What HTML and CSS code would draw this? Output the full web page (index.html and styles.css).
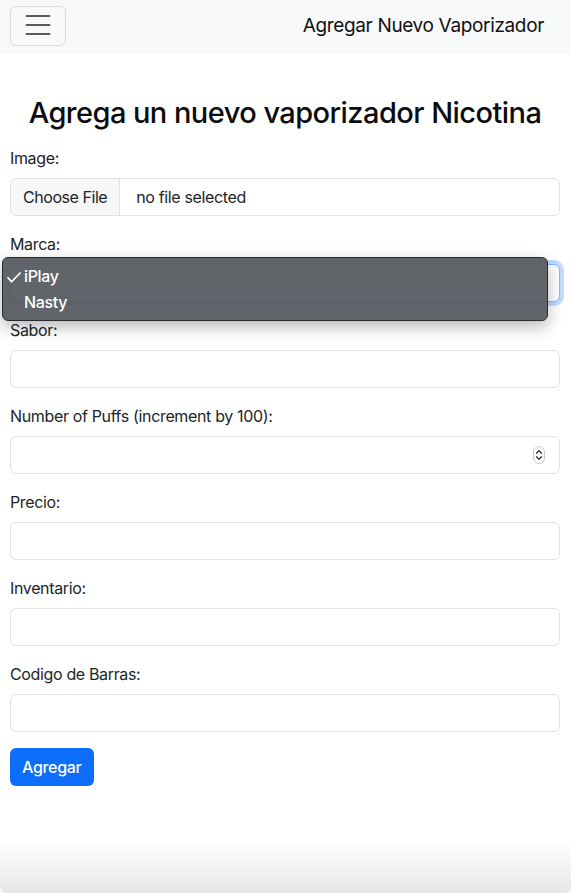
FILE: index.html
```html
<!DOCTYPE html>
<html lang="es">
<head>
<meta charset="utf-8">
<title>Agregar Nuevo Vaporizador</title>
<link rel="stylesheet" href="styles.css">
</head>
<body>
<nav class="navbar">
  <button class="toggler" type="button" aria-label="Menu">
    <svg class="toggler-icon" width="30" height="30" viewBox="0 0 30 30">
      <path d="M3.5 5h23M3.5 14h23M3.5 23h23" stroke="rgba(33,37,41,0.75)" stroke-width="2" stroke-linecap="round"/>
    </svg>
  </button>
  <span class="brand">Agregar Nuevo Vaporizador</span>
</nav>
<main class="container">
  <h1 class="title">Agrega un nuevo vaporizador Nicotina</h1>
  <form class="form">
    <div class="group">
      <label class="label">Image:</label>
      <div class="file-input">
        <span class="file-btn">Choose File</span>
        <span class="file-name">no file selected</span>
      </div>
    </div>
    <div class="group select-group">
      <label class="label">Marca:</label>
      <div class="control select-control"></div>
      <div class="popup">
        <div class="option">
          <span class="check">
            <svg width="14" height="11" viewBox="0 0 14 11"><path d="M1 5.6L4.4 9.8L13.2 1" fill="none" stroke="#fff" stroke-width="1.7" stroke-linecap="round" stroke-linejoin="round"/></svg>
          </span>iPlay
        </div>
        <div class="option"><span class="check"></span>Nasty</div>
      </div>
    </div>
    <div class="group">
      <label class="label">Sabor:</label>
      <div class="control"></div>
    </div>
    <div class="group">
      <label class="label">Number of Puffs (increment by 100):</label>
      <div class="control number-control">
        <svg class="spinner" width="12" height="18" viewBox="0 0 12 18">
          <rect x="0.5" y="0.5" width="11" height="17" rx="5.5" fill="#fff" stroke="#c8c8c8"/>
          <path d="M3.5 7.2L6 4.6l2.5 2.6M3.5 10.8L6 13.4l2.5-2.6" fill="none" stroke="#333" stroke-width="1.3" stroke-linecap="round" stroke-linejoin="round"/>
        </svg>
      </div>
    </div>
    <div class="group">
      <label class="label">Precio:</label>
      <div class="control"></div>
    </div>
    <div class="group">
      <label class="label">Inventario:</label>
      <div class="control"></div>
    </div>
    <div class="group">
      <label class="label">Codigo de Barras:</label>
      <div class="control"></div>
    </div>
    <button class="submit" type="button">Agregar</button>
  </form>
</main>
<div class="window-edge"></div>
</body>
</html>
```

FILE: styles.css
```css
* { box-sizing: border-box; }

html, body {
  margin: 0;
  padding: 0;
  background: #fff;
  color: #212529;
  font-family: Inter, "Noto Sans", "Liberation Sans", sans-serif;
  font-size: 16px;
  line-height: 24px;
  letter-spacing: -0.35px;
}

.navbar {
  height: 54px;
  background: #f8f9fa;
  display: flex;
  align-items: flex-start;
  justify-content: space-between;
  padding: 6px 27px 0 10px;
}

.toggler {
  width: 56px;
  height: 40px;
  padding: 4px 12px;
  border: 1px solid rgba(0, 0, 0, 0.12);
  border-radius: 6px;
  background: transparent;
  display: flex;
  align-items: center;
  justify-content: center;
}

.toggler-icon { display: block; }

.brand {
  font-size: 19px;
  line-height: 30px;
  margin-top: 5px;
  letter-spacing: -0.35px;
  color: #111;
}

.container {
  padding: 0 11px 0 10px;
}

.title {
  margin: 41px 0 15px;
  font-size: 29px;
  line-height: 36px;
  font-weight: 500;
  text-align: center;
  letter-spacing: -0.55px;
  color: #0b0c0d;
}

.form {
  display: flex;
  flex-direction: column;
}

.group {
  display: flex;
  flex-direction: column;
  margin-bottom: 16px;
}

.label {
  display: block;
  margin-bottom: 8px;
  line-height: 24px;
}

.control {
  height: 38px;
  border: 1px solid #dee2e6;
  border-radius: 6px;
  background: #fff;
}

.file-input {
  height: 38px;
  border: 1px solid #dee2e6;
  border-radius: 6px;
  display: flex;
  align-items: stretch;
  overflow: hidden;
}

.file-btn {
  display: flex;
  align-items: center;
  padding: 0 12px 0 12px;
  background: #f6f7f8;
  border-right: 1px solid #dee2e6;
  letter-spacing: -0.45px;
}

.file-name {
  display: flex;
  align-items: center;
  padding-left: 16px;
}

.select-group { position: relative; }

.select-control {
  border-color: #86b7fe;
  box-shadow: 0 0 0 4px rgba(13, 110, 253, 0.25);
}

.popup {
  position: absolute;
  left: -8px;
  top: 25px;
  width: 546px;
  padding: 5px 0 5px;
  background: rgba(92, 95, 100, 0.97);
  border: 1px solid #2a2a2c;
  border-radius: 6px;
  box-shadow: 0 6px 16px rgba(0, 0, 0, 0.28);
  color: #fff;
}

.option {
  height: 26px;
  display: flex;
  align-items: center;
  font-weight: 500;
  font-size: 16px;
}

.check {
  width: 21px;
  padding-left: 4px;
  display: flex;
  align-items: center;
  padding-top: 2px;
}

.check svg { display: block; }

.number-control {
  display: flex;
  align-items: center;
  justify-content: flex-end;
  padding-right: 14px;
}

.spinner { display: block; }

.submit {
  align-self: flex-start;
  height: 38px;
  padding: 0 12px;
  border: 0;
  border-radius: 6px;
  background: #0d6efd;
  color: #fff;
  font-family: inherit;
  font-size: 16px;
  font-weight: 500;
  letter-spacing: -0.3px;
}

.window-edge {
  position: fixed;
  left: 0;
  right: 0;
  bottom: 0;
  height: 52px;
  background: linear-gradient(rgba(230, 230, 230, 0), rgba(226, 226, 226, 0.85));
  border-radius: 0 0 6px 6px;
  pointer-events: none;
}
```
